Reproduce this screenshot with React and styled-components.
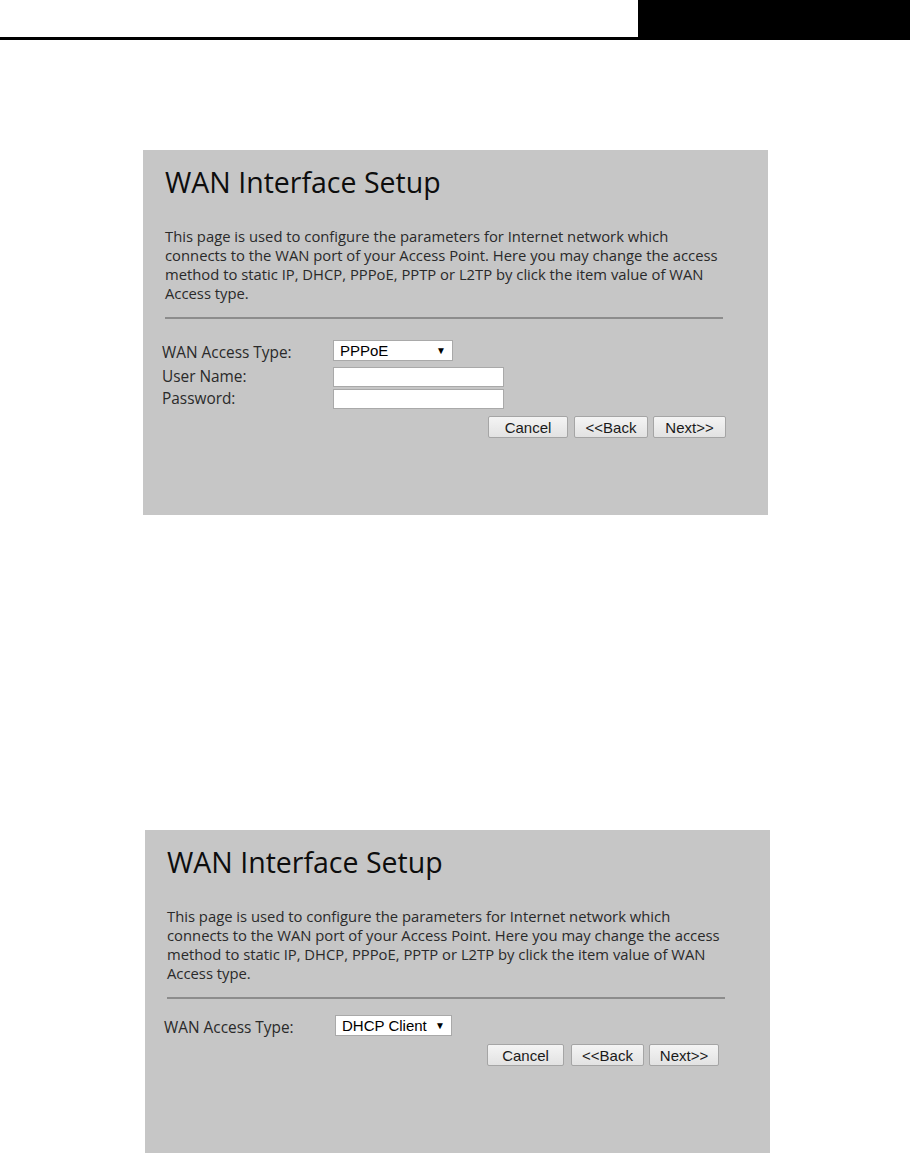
import React from 'react';
import styled, { createGlobalStyle } from 'styled-components';

const Global = createGlobalStyle`
  html, body {
    margin: 0;
    padding: 0;
    background: #fff;
  }
  body {
    height: 1153px;
    overflow: hidden;
  }
`;

const Header = styled.div`
  display: flex;
  justify-content: flex-end;
  height: 37px;
  border-bottom: 3px solid #000;
`;

const HeaderBlock = styled.div`
  width: 272px;
  background: #000;
`;

const PanelW = styled.div`
  background: #c6c6c6;
  box-sizing: border-box;
  width: 625px;
  height: ${(p) => p.$height}px;
  margin-top: ${(p) => p.$top}px;
  margin-left: ${(p) => p.$left}px;
  padding: 0 45px 0 22px;
  font-family: 'Open Sans', 'Noto Sans', sans-serif;
  color: #222;
  overflow: hidden;
`;

const Title = styled.h1`
  margin: 0;
  padding-top: 14px;
  font-size: 28.5px;
  font-weight: 400;
  line-height: 36px;
  color: #0d0d0d;
`;

const Intro = styled.p`
  margin: 27px 0 0;
  font-size: 14.8px;
  line-height: 19px;
  color: #2a2a2a;
  white-space: nowrap;
`;

const Rule = styled.hr`
  margin: 14px 0 0;
  border: 0;
  height: 2px;
  background: #8c8c8c;
`;

const Form = styled.div`
  display: grid;
  grid-template-columns: 171px auto;
  row-gap: 2px;
  margin: ${(p) => p.$top}px 0 0 -3px;
  align-items: center;
`;

const Label = styled.label`
  font-size: 15.4px;
  color: #2a2a2a;
  line-height: 20px;
`;

const Select = styled.div`
  display: flex;
  align-items: center;
  justify-content: space-between;
  box-sizing: border-box;
  width: ${(p) => p.$width}px;
  height: 21px;
  padding: 0 6px;
  background: #fff;
  border: 1px solid #a9a9a9;
  font-family: 'Liberation Sans', Arial, sans-serif;
  font-size: 15px;
  color: #000;
  margin-bottom: 4px;
`;

const Arrow = styled.span`
  font-size: 10px;
`;

const Input = styled.input`
  box-sizing: border-box;
  width: 171px;
  height: 20px;
  margin: 0;
  background: #fff;
  border: 1px solid #a9a9a9;
`;

const Buttons = styled.div`
  display: flex;
  justify-content: flex-end;
  margin-top: ${(p) => p.$top}px;
  margin-right: ${(p) => p.$right}px;
`;

const Button = styled.button`
  box-sizing: border-box;
  width: ${(p) => p.$width}px;
  height: 22px;
  margin-left: ${(p) => p.$gap}px;
  padding: 0;
  border: 1px solid #a5a5a5;
  border-radius: 2px;
  background: linear-gradient(#f4f4f4, #e2e2e2);
  font-family: 'Liberation Sans', Arial, sans-serif;
  font-size: 15px;
  color: #1a1a1a;
`;

const intro = (
  <>
    This page is used to configure the parameters for Internet network which
    <br />
    connects to the WAN port of your Access Point. Here you may change the access
    <br />
    method to static IP, DHCP, PPPoE, PPTP or L2TP by click the item value of WAN
    <br />
    Access type.
  </>
);

const labels = ['Cancel', '<<Back', 'Next>>'];

const Panel = ({ top, left, height, type, selectWidth, withLogin, formTop, buttonTop, buttonRight, widths, gaps }) => (
  <PanelW $top={top} $left={left} $height={height}>
    <Title>WAN Interface Setup</Title>
    <Intro>{intro}</Intro>
    <Rule />
    <Form $top={formTop}>
      <Label>WAN Access Type:</Label>
      <Select $width={selectWidth}>
        <span>{type}</span>
        <Arrow>▼</Arrow>
      </Select>
      {withLogin && (
        <>
          <Label>User Name:</Label>
          <Input type="text" />
          <Label>Password:</Label>
          <Input type="password" />
        </>
      )}
    </Form>
    <Buttons $top={buttonTop} $right={buttonRight}>
      {labels.map((text, i) => (
        <Button key={text} $width={widths[i]} $gap={gaps[i]}>
          {text}
        </Button>
      ))}
    </Buttons>
  </PanelW>
);

export default function App() {
  return (
    <>
      <Global />
      <Header>
        <HeaderBlock />
      </Header>
      <Panel
        top={110}
        left={143}
        height={365}
        type="PPPoE"
        selectWidth={120}
        withLogin
        formTop={21}
        buttonTop={7}
        buttonRight={-3}
        widths={[80, 74, 73]}
        gaps={[0, 6, 5]}
      />
      <Panel
        top={315}
        left={145}
        height={340}
        type="DHCP Client"
        selectWidth={117}
        formTop={16}
        buttonTop={4}
        buttonRight={6}
        widths={[77, 73, 70]}
        gaps={[0, 7, 5]}
      />
    </>
  );
}
